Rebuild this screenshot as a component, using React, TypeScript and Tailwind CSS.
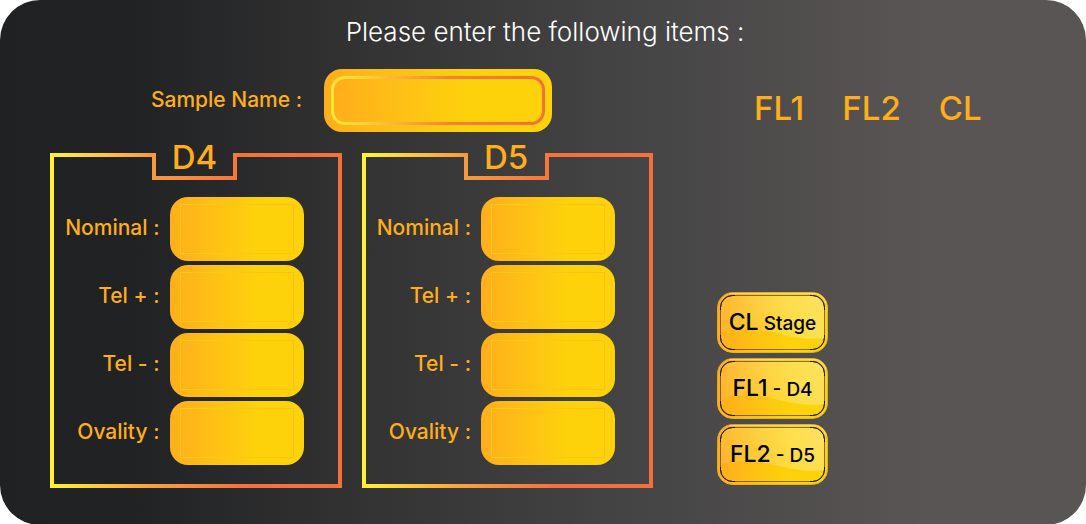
const fieldNames = ["Nominal", "Tel +", "Tel -", "Ovality"];

function Panel({ title }: { title: string }) {
  return (
    <section
      aria-label={title}
      className="flex flex-col border-4 border-t-0 pb-[19px] [border-image:linear-gradient(to_right,#fff237_0%,#f9a03f_35%,#f4743c_65%,#f1703c_100%)_4]"
    >
      <header className="flex items-start">
        <div className="h-1 w-[98px] bg-linear-to-r from-[#fff237] to-[#f69a40]" />
        <div className="flex h-[27px] w-[85px] justify-center border-4 border-t-0 [border-image:linear-gradient(to_right,#f69a40,#f4763c)_4]">
          <h2 className="-mt-4 text-[33px] leading-10 font-medium">{title}</h2>
        </div>
        <div className="h-1 flex-1 bg-[#f2733c]" />
      </header>
      <div className="mt-[17px] flex flex-col gap-1 pr-[34px]">
        {fieldNames.map((name) => (
          <label key={name} className="flex items-center justify-end gap-[10px]">
            <span className="pb-0.5 text-[21px] leading-7 font-medium">{name} :</span>
            <span className="flex h-16 w-[134px] rounded-[18px] bg-linear-to-r from-[#ffae1b] to-[#fdd20b] to-65% px-[10px] py-[7px]">
              <input
                type="text"
                className="w-full min-w-0 border bg-transparent px-2 text-xl text-[#212224] outline-none [border-image:linear-gradient(to_right,#ffc91c,#fdc812_50%,#ffbe16)_1]"
              />
            </span>
          </label>
        ))}
      </div>
    </section>
  );
}

function StageButton({ main, rest }: { main: string; rest: string }) {
  return (
    <button type="button" className="relative h-[61px] w-[111px] whitespace-nowrap text-black">
      <svg className="absolute inset-0 size-full" viewBox="0 0 111 61" aria-hidden="true">
        <defs>
          <linearGradient id="stage-face" x1="0" x2="1">
            <stop offset="0" stopColor="#ffae1b" />
            <stop offset="0.65" stopColor="#fdd20b" />
          </linearGradient>
          <linearGradient id="stage-edge" x1="0" x2="1" y1="0" y2="1">
            <stop offset="0" stopColor="#d99a2c" />
            <stop offset="0.5" stopColor="#f0b52c" />
            <stop offset="1" stopColor="#e0b01c" />
          </linearGradient>
          <linearGradient id="stage-gloss" x1="0" x2="1" y1="0.6" y2="0.3">
            <stop offset="0" stopColor="#fff" stopOpacity="0.08" />
            <stop offset="1" stopColor="#fff" stopOpacity="0.34" />
          </linearGradient>
        </defs>
        <rect x="0.5" y="0.5" width="110" height="60" rx="15" fill="url(#stage-face)" stroke="url(#stage-edge)" />
        <path d="M12 1.5H99Q107 3 109 12" fill="none" stroke="#ffe08a" strokeOpacity="0.7" />
        <path
          d="M3.5 15A12 12 0 0 1 15.5 3.5H95.5A12 12 0 0 1 107.5 15V46C88 49 72 44 54 40C36 36 20 37 3.5 40Z"
          fill="url(#stage-gloss)"
        />
        <rect x="3.5" y="3.5" width="104" height="54" rx="12" fill="none" stroke="#1c1a12" strokeOpacity="0.55" />
        <path
          d="M3.5 18V15.5A12 12 0 0 1 15.5 3.5H18M93 3.5H95.5A12 12 0 0 1 107.5 15.5V18M107.5 43V45.5A12 12 0 0 1 95.5 57.5H93M18 57.5H15.5A12 12 0 0 1 3.5 45.5V43"
          fill="none"
          stroke="#111"
        />
      </svg>
      <span className="relative text-[23px] font-medium">{main}</span>
      <span className="relative text-[19px] font-medium"> {rest}</span>
    </button>
  );
}

export default function App() {
  return (
    <main className="rounded-[40px] bg-[linear-gradient(to_right,#202123_0%,#212224_12%,#333333_34%,#434343_56%,#595554_85%)] px-[50px] pt-4 pb-[37px] font-['Inter',sans-serif] text-[#ffae1b]">
      <div className="-mx-[50px] text-center">
        <h1 className="pl-1 text-[26px] leading-8 font-light text-white">
          Please enter the following items :
        </h1>
      </div>
      <div className="-mr-[50px] grid grid-cols-[603fr_433fr] pt-[21px]">
        <div>
          <label className="flex items-center justify-center gap-[22px]">
            <span className="pb-0.5 text-[21px] leading-7 font-medium">Sample Name :</span>
            <span className="flex h-[63px] w-[228px] rounded-[18px] bg-linear-to-r from-[#ffae1b] to-[#fdd20b] to-65% p-[7px]">
              <span className="flex w-full rounded-[14px] bg-[linear-gradient(to_right,#ffe936_0%,#ffd83a_12%,#f4813c_55%,#f1703c_100%)] p-[3px]">
                <input
                  type="text"
                  className="w-full min-w-0 rounded-[11px] bg-linear-to-r from-[#ffae1b] to-[#fdd20b] to-65% px-3 text-xl text-[#212224] outline-none"
                />
              </span>
            </span>
          </label>
          <div className="mt-[21px] grid grid-cols-2 gap-5">
            <Panel title="D4" />
            <Panel title="D5" />
          </div>
        </div>
        <div className="flex flex-col justify-between pt-[19px] pb-[3px] pl-[64px]">
          <div className="flex gap-[38px] pl-[37px] text-[33px] leading-10 font-medium">
            <span>FL1</span>
            <span>FL2</span>
            <span>CL</span>
          </div>
          <div className="flex flex-col items-start gap-[5px]">
            <StageButton main="CL" rest="Stage" />
            <StageButton main="FL1" rest="- D4" />
            <StageButton main="FL2" rest="- D5" />
          </div>
        </div>
      </div>
    </main>
  );
}
